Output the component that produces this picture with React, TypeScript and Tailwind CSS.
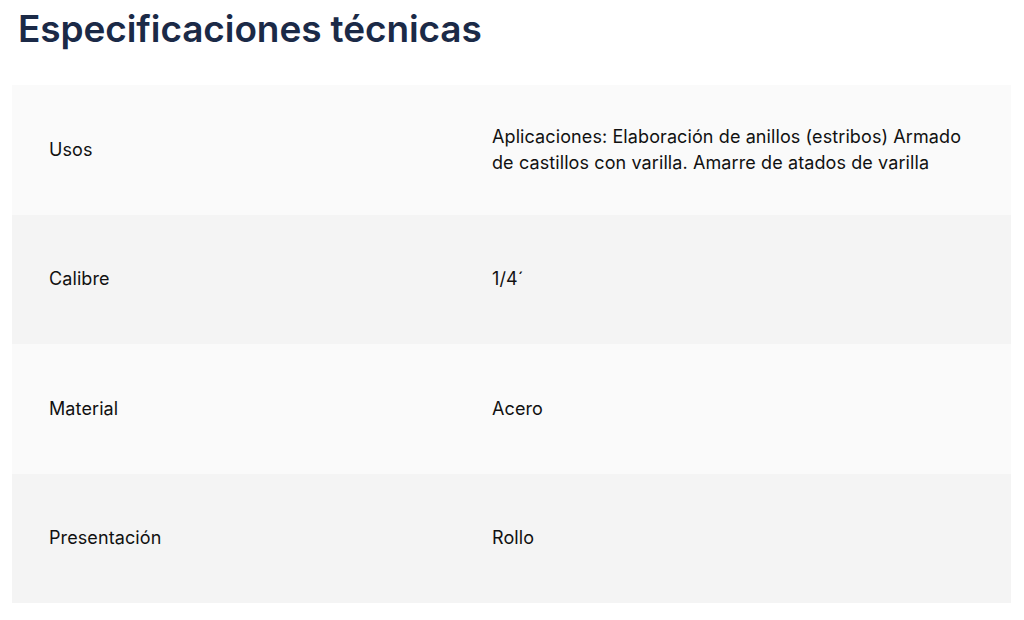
const specs = [
  {
    label: "Usos",
    value: "Aplicaciones: Elaboración de anillos (estribos) Armado de castillos con varilla. Amarre de atados de varilla",
  },
  { label: "Calibre", value: "1/4´" },
  { label: "Material", value: "Acero" },
  { label: "Presentación", value: "Rollo" },
];

export default function App() {
  return (
    <div className="min-h-[620px] bg-white font-['Inter',sans-serif]">
      <h1 className="pl-[18px] pt-[7px] text-[37px] leading-[44px] font-semibold tracking-[-0.1px] text-[#1b2a47]">
        Especificaciones técnicas
      </h1>
      <div className="mx-3 mt-[34px] w-[999px]">
        {specs.map((s, i) => (
          <div
            key={s.label}
            className={`grid h-[129.5px] grid-cols-[443px_1fr] items-center text-[18px] leading-[26px] tracking-[0.1px] text-[#111] ${
              i % 2 === 0 ? "bg-[#fafafa]" : "bg-[#f4f4f4]"
            }`}
          >
            <div className="px-[37px]">{s.label}</div>
            <div className="pl-[37px] pr-[40px]">{s.value}</div>
          </div>
        ))}
      </div>
    </div>
  );
}
